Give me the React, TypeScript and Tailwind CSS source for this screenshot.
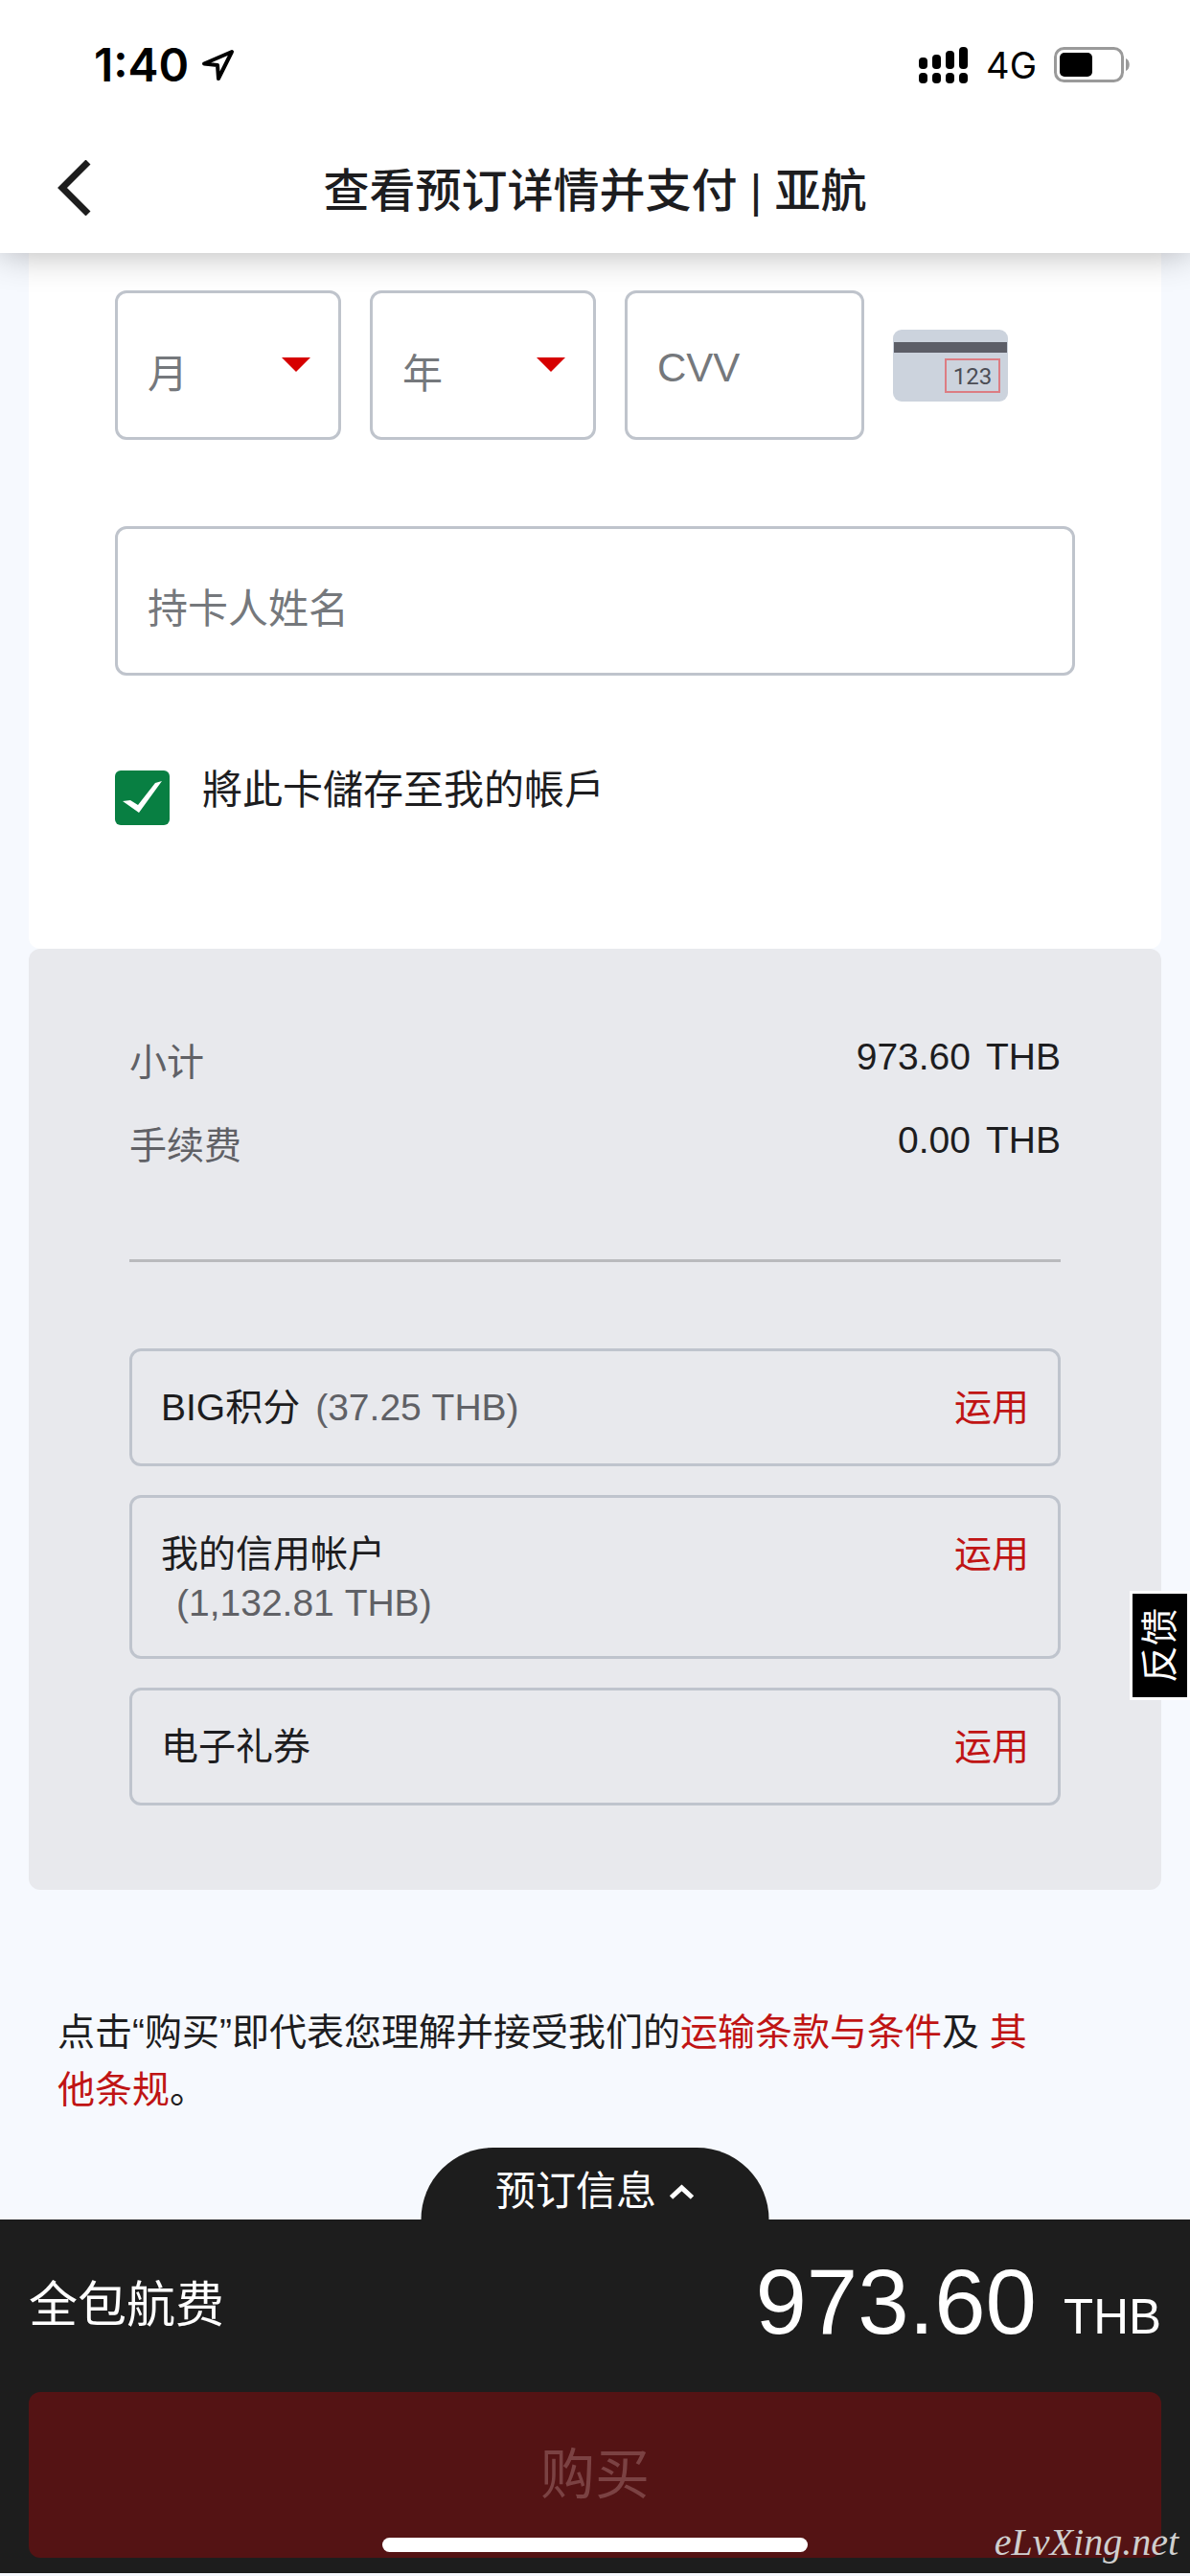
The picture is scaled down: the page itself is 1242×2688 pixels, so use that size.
import React, { useState } from "react";

type Credit = {
  name: string;
  balance?: string;
  wrap?: boolean;
};

const credits: Credit[] = [
  { name: "BIG积分", balance: "(37.25 THB)" },
  { name: "我的信用帐户", balance: "(1,132.81 THB)", wrap: true },
  { name: "电子礼券" },
];

const charges = [
  { label: "小计", amount: "973.60" },
  { label: "手续费", amount: "0.00" },
];

const months = Array.from({ length: 12 }, (_, i) => String(i + 1));
const years = Array.from({ length: 10 }, (_, i) => String(2020 + i));

const fieldClass =
  "h-[156px] w-full rounded-xl border-3 border-[#bfc4cc] bg-white px-[31px] text-[42px] text-[#75787c] outline-none placeholder:text-[#75787c]";

const StatusBar = () => (
  <div className="flex h-[136px] items-center justify-between pl-[98px] pr-[62px] text-black">
    <div className="flex items-center gap-3">
      <span className="font-[Inter] text-[48px] font-semibold leading-[60px]">
        1:40
      </span>
      <svg className="h-9 w-9" viewBox="0 0 36 36" fill="none">
        <path
          d="M33 4L4 16.5L18 18L19 32Z"
          stroke="currentColor"
          strokeWidth="4"
          strokeLinejoin="round"
        />
      </svg>
    </div>
    <div className="flex items-center gap-[18px]">
      <svg className="h-[38px] w-[52px]" viewBox="0 0 52 38" fill="currentColor">
        <rect x="0" y="11" width="9" height="12" rx="4" />
        <rect x="14" y="8" width="9" height="15" rx="4" />
        <rect x="28" y="4" width="9" height="19" rx="4" />
        <rect x="42" y="0" width="9" height="23" rx="4" />
        <rect x="0" y="27" width="9" height="11" rx="4" />
        <rect x="14" y="27" width="9" height="11" rx="4" />
        <rect x="28" y="27" width="9" height="11" rx="4" />
        <rect x="42" y="27" width="9" height="11" rx="4" />
      </svg>
      <span className="font-[Inter] text-[38px] leading-[60px]">4G</span>
      <svg className="h-[38px] w-20" viewBox="0 0 80 38">
        <rect
          x="1.5"
          y="1.5"
          width="70"
          height="34"
          rx="9"
          fill="none"
          stroke="#9a9a9a"
          strokeWidth="3"
        />
        <rect x="6" y="6" width="34" height="25" rx="5" fill="#000" />
        <path d="M75 12C80 14 80 23 75 25Z" fill="#9a9a9a" />
      </svg>
    </div>
  </div>
);

const DateSelect = ({
  id,
  label,
  options,
}: {
  id: string;
  label: string;
  options: string[];
}) => (
  <div className="relative">
    <select
      id={id}
      aria-label={label}
      defaultValue=""
      className={`${fieldClass} appearance-none pt-[18px]`}
    >
      <option value="">{label}</option>
      {options.map((opt) => (
        <option key={opt} value={opt}>
          {opt}
        </option>
      ))}
    </select>
    <svg
      className="pointer-events-none absolute right-8 top-[70px] h-[15px] w-[30px]"
      viewBox="0 0 30 15"
    >
      <path d="M0 0H30L15 15Z" fill="#d60000" />
    </svg>
  </div>
);

const CvvCard = () => (
  <svg className="h-[75px] w-[120px]" viewBox="0 0 120 75">
    <rect width="120" height="75" rx="9" fill="#ccd3dd" />
    <rect x="1" y="13" width="118" height="11" fill="#5c5e67" />
    <rect
      x="55"
      y="31"
      width="56"
      height="34"
      fill="none"
      stroke="#dc7d83"
      strokeWidth="2"
    />
    <text
      x="83"
      y="57"
      textAnchor="middle"
      fontFamily="Roboto, sans-serif"
      fontSize="24"
      fill="#4b4d55"
    >
      123
    </text>
  </svg>
);

const App = () => {
  const [saveCard, setSaveCard] = useState(true);

  return (
    <div className="relative flex min-h-screen flex-col bg-[#f6f9fe] pb-[3px] font-['Liberation_Sans','Noto_Sans_CJK_SC',sans-serif] text-[#1d1d1f]">
      <header className="sticky top-0 z-10 bg-white shadow-[0_0_36px_rgba(0,0,0,0.3)]">
        <StatusBar />
        <div className="grid h-[128px] grid-cols-[96px_1fr_96px] items-center">
          <button type="button" aria-label="返回" className="pb-2 pl-[60px]">
            <svg className="h-[58px] w-[35px]" viewBox="0 0 35 58" fill="none">
              <path d="M32 2L5 29L32 56" stroke="#1d1d1d" strokeWidth="7" />
            </svg>
          </button>
          <h1 className="text-center text-[48px] font-medium leading-[72px]">
            查看预订详情并支付 | 亚航
          </h1>
        </div>
      </header>

      <main className="px-[30px]">
        <form className="rounded-b-xl bg-white px-[90px] pb-[129px] pt-[39px]">
          <div className="grid grid-cols-[236fr_236fr_250fr_190fr] items-center gap-[30px]">
            <DateSelect id="month" label="月" options={months} />
            <DateSelect id="year" label="年" options={years} />
            <input
              className={`${fieldClass} pt-[6px]`}
              aria-label="CVV"
              placeholder="CVV"
              inputMode="numeric"
            />
            <CvvCard />
          </div>
          <input
            className={`${fieldClass} mt-[90px] pt-[18px]`}
            aria-label="持卡人姓名"
            placeholder="持卡人姓名"
          />
          <label className="mt-[99px] flex items-start gap-[34px]">
            <span className="relative h-[57px] w-[57px]">
              <input
                type="checkbox"
                checked={saveCard}
                onChange={(e) => setSaveCard(e.target.checked)}
                className="block h-full w-full appearance-none rounded-md border-3 border-[#bfc4cc] checked:border-0 checked:bg-[#087f42]"
              />
              {saveCard && (
                <svg
                  className="pointer-events-none absolute inset-0"
                  viewBox="0 0 57 57"
                >
                  <path
                    d="M8 32L16 31L24 36L42 13L49 11L25 44Z"
                    fill="#fff"
                  />
                </svg>
              )}
            </span>
            <span className="font-['Liberation_Sans','Noto_Sans_CJK_TC',sans-serif] text-[42px] leading-[42px]">
              將此卡儲存至我的帳戶
            </span>
          </label>
        </form>

        <section className="rounded-xl bg-[#e8e9ed] px-[105px] pb-[88px] pt-[84px] text-[39px]">
          <dl className="flex flex-col gap-[18px] border-b-3 border-[#b9babd] pb-[84px]">
            {charges.map((item) => (
              <div key={item.label} className="flex items-start justify-between">
                <dt className="leading-[69px] text-[#606166]">{item.label}</dt>
                <dd className="flex gap-4 leading-[57px]">
                  <span>{item.amount}</span>
                  <span>THB</span>
                </dd>
              </div>
            ))}
          </dl>

          <ul className="mt-[90px] flex flex-col gap-[30px] leading-[51px]">
            {credits.map((credit) => (
              <li
                key={credit.name}
                className="flex min-h-[123px] items-start justify-between rounded-xl border-3 border-[#bfc4cd] px-[30px] pb-[30px] pt-[33px]"
              >
                <span>
                  {credit.name}
                  {credit.wrap && <br />}
                  {credit.balance && (
                    <span className="ml-4 text-[#606166]">{credit.balance}</span>
                  )}
                </span>
                <button type="button" className="text-[#c01414]">
                  运用
                </button>
              </li>
            ))}
          </ul>
        </section>

        <p className="pb-[105px] pl-[30px] pr-[120px] pt-[119px] text-[39px] leading-[60px]">
          点击“购买”即代表您理解并接受我们的
          <a href="#terms" className="text-[#c01414]">
            运输条款与条件
          </a>
          及{" "}
          <a href="#rules" className="text-[#c01414]">
            其他条规
          </a>
          。
        </p>
      </main>

      <button
        type="button"
        className="absolute right-0 top-[1660px] flex h-[114px] w-[63px] items-center justify-center border-3 border-white bg-black text-[39px] leading-[57px] text-white"
      >
        <span className="rotate-180 [text-orientation:sideways] [writing-mode:vertical-rl]">
          反馈
        </span>
      </button>

      <footer className="sticky bottom-0 mt-auto bg-[#1d1d1d] px-[30px] pb-4 text-white">
        <button
          type="button"
          className="absolute bottom-full left-1/2 flex h-[75px] w-[363px] -translate-x-1/2 items-center justify-center gap-3 rounded-t-full bg-[#1d1d1d] pt-4 text-[42px] leading-[60px]"
        >
          预订信息
          <svg className="h-4 w-7" viewBox="0 0 28 16" fill="none">
            <path d="M3 14L14 4L25 14" stroke="#fff" strokeWidth="5" />
          </svg>
        </button>
        <div className="flex h-[180px] items-center justify-between">
          <span className="text-[51px]">全包航费</span>
          <span className="flex items-baseline gap-7 pb-2 text-[96px]">
            973.60 <span className="text-[51px]">THB</span>
          </span>
        </div>
        <button
          type="button"
          disabled
          className="block h-[173px] w-full rounded-xl bg-[#541314] text-[57px] text-[#7b4243]"
        >
          购买
        </button>
        <div className="absolute bottom-[22px] left-1/2 h-[15px] w-[444px] -translate-x-1/2 rounded-full bg-white" />
        <span className="absolute bottom-2 right-3 font-['Liberation_Serif',serif] text-[40px] italic leading-[48px] text-[#cfcfcf]">
          eLvXing.net
        </span>
      </footer>
    </div>
  );
};

export default App;
